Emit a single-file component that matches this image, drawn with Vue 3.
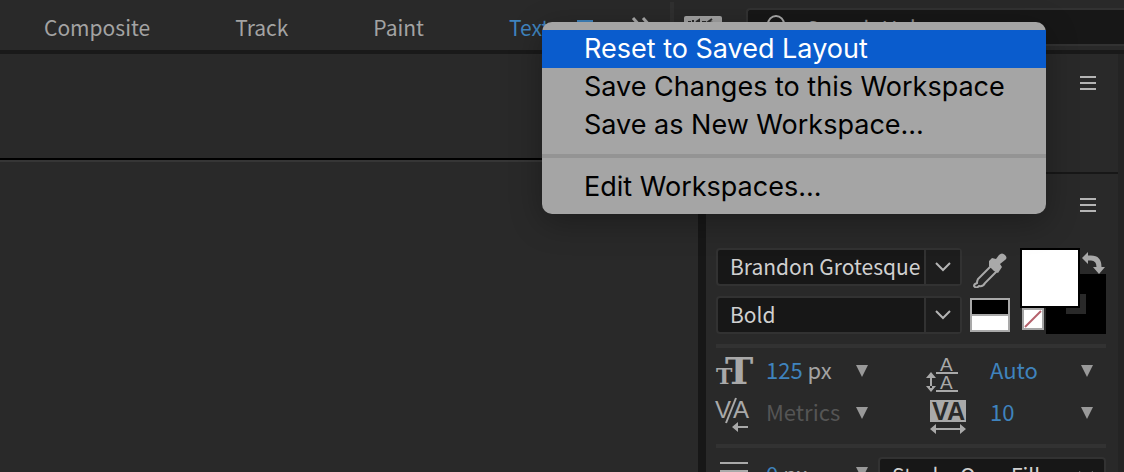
<script setup>
const tabs = ['Composite', 'Track', 'Paint']
const fields = [
  { id: 'family', label: 'Font family', value: 'Brandon Grotesque' },
  { id: 'weight', label: 'Font style', value: 'Bold' }
]
</script>

<template>
  <div class="app">
    <header class="topbar">
      <nav class="tabs" aria-label="Workspaces">
        <button v-for="t in tabs" :key="t">{{ t }}</button>
        <button class="active">Text</button>
      </nav>
      <button class="burger blue" aria-label="Workspace menu"><i></i><i></i><i></i></button>
      <button class="more" aria-label="More workspaces">
        <svg width="22" height="22" viewBox="0 0 22 22"><path d="M2 2l8 9-8 9M12 2l8 9-8 9" fill="none" stroke="#a9a9a9" stroke-width="3" /></svg>
      </button>
      <span class="rule"></span>
      <button class="keys" aria-label="Keyboard shortcuts">
        <svg width="38" height="22" viewBox="0 0 38 22"><rect width="38" height="22" rx="2" fill="#a3a3a3" /><path d="M4 6h3M9 4v3M12 6l3-2v3M18 6h4M28 3l-4 3 5 1" stroke="#292929" stroke-width="2" fill="none" /></svg>
      </button>
      <label class="search">
        <svg width="24" height="24" viewBox="0 0 24 24"><circle cx="14" cy="9" r="8" fill="none" stroke="#a9a9a9" stroke-width="2" /><path d="M8 15l-6 7" stroke="#a9a9a9" stroke-width="3" /></svg>
        <input type="search" placeholder="Search Help" aria-label="Search Help" />
      </label>
    </header>

    <main class="work">
      <section class="viewer"><div class="viewer-head"></div></section>
      <aside class="side">
        <section class="panel closed">
          <button class="burger" aria-label="Panel menu"><i></i><i></i><i></i></button>
        </section>
        <section class="panel">
          <button class="burger" aria-label="Character panel menu"><i></i><i></i><i></i></button>
          <div class="face">
            <div class="fields">
              <div v-for="f in fields" :key="f.id" class="combo">
                <select :id="f.id" :aria-label="f.label"><option>{{ f.value }}</option></select>
                <span class="arrow"><svg width="16" height="10" viewBox="0 0 16 10"><path d="M1 1l7 7 7-7" fill="none" stroke="#b4b4b4" stroke-width="2" /></svg></span>
              </div>
            </div>
            <div class="tools">
              <button class="picker" aria-label="Eyedropper">
                <svg width="34" height="36" viewBox="0 0 34 36">
                  <path d="M18 14L5 27Q4 29 4 31Q1 32 1 34Q3 37 6 34Q10 35 12 31L24 19" fill="none" stroke="#a9a9a9" stroke-width="2" />
                  <path d="M16 9l3-3 4 1 3-4Q29 0 32 3T32 8L27 12l2 3-4 6-4-2-5-5z" fill="#a9a9a9" />
                </svg>
              </button>
              <button class="bw" aria-label="Set to black or white"><b></b><b></b></button>
            </div>
            <svg class="swatches" width="86" height="86" viewBox="0 0 86 86" role="img" aria-label="Fill and stroke colour">
              <path d="M26 26h60v60H26zM46 46v20h20V46z" fill="#000" fill-rule="evenodd" />
              <rect width="60" height="60" fill="#000" /><rect x="2" y="2" width="56" height="56" fill="#fff" />
              <rect x="3" y="61" width="20" height="20" fill="#fff" stroke="#a5a5a5" stroke-width="2" />
              <path d="M5 79L21 63" stroke="#b5616b" stroke-width="2" />
              <path d="M67 10h4Q79 10 79 19" fill="none" stroke="#a9a9a9" stroke-width="5" />
              <path d="M62 10l6-6v12zM73 19h12l-6 7z" fill="#a9a9a9" />
            </svg>
          </div>

          <div class="metrics">
            <svg width="38" height="42" viewBox="0 0 38 42" class="slab"><text x="9" y="34" font-size="38">T</text><text x="0" y="34" font-size="22">T</text></svg>
            <button class="val"><em>125</em> px</button><button class="tri" aria-label="Font size options"></button>
            <svg width="40" height="42" viewBox="0 0 40 42" class="lead">
              <text x="14" y="21">A</text><text x="14" y="39">A</text>
              <path d="M10 22h22v2H10zM10 40h22v2H10zM4 26h2v12H4zM0 28l5-6 5 6zM0 36l5 6 5-6z" />
            </svg>
            <button class="val"><em>Auto</em></button><button class="tri" aria-label="Leading options"></button>

            <svg width="38" height="42" viewBox="0 0 38 42" class="kern">
              <text x="-1" y="26">V</text><text x="17" y="26">A</text>
              <path d="M10 31L20 6" stroke="#a9a9a9" stroke-width="2" />
              <path d="M16 35l6-5v4h10v2H22v4z" />
            </svg>
            <button class="val dim">Metrics</button><button class="tri" aria-label="Kerning options"></button>
            <svg width="40" height="42" viewBox="0 0 40 42" class="track">
              <rect x="4" y="8" width="36" height="22" />
              <text x="6" y="28">V</text><text x="21" y="28">A</text>
              <path d="M4 37l6-5v4h24v-4l6 5-6 5v-4H10v4z" />
            </svg>
            <button class="val"><em>10</em></button><button class="tri" aria-label="Tracking options"></button>
          </div>

          <div class="stroke">
            <svg width="38" height="38" viewBox="0 0 38 38"><path d="M4 5h28v2H4zM4 13h28v4H4zM4 23h28v6H4z" fill="#a9a9a9" /></svg>
            <button class="val"><em>0</em> px</button><button class="tri" aria-label="Stroke width options"></button>
            <div class="combo plain">
              <select aria-label="Stroke order"><option>Stroke Over Fill</option></select>
              <span class="arrow"><svg width="16" height="10" viewBox="0 0 16 10"><path d="M1 1l7 7 7-7" fill="none" stroke="#b4b4b4" stroke-width="2" /></svg></span>
            </div>
          </div>
        </section>
      </aside>
    </main>

    <div class="menu" role="menu">
      <button role="menuitem" class="hot">Reset to Saved Layout</button>
      <button role="menuitem">Save Changes to this Workspace</button>
      <button role="menuitem">Save as New Workspace...</button>
      <hr />
      <button role="menuitem">Edit Workspaces...</button>
    </div>
  </div>
</template>

<style>
body { margin: 0; background: #292929; }
</style>

<style scoped>
* { box-sizing: border-box; }
.app { position: relative; height: 100vh; overflow: hidden; display: flex; flex-direction: column; background: #292929; color: #a3a3a3; font: 22px/32px "Noto Sans CJK JP", sans-serif; }
button, select, input { font: inherit; color: inherit; background: none; border: 0; padding: 0; margin: 0; outline: 0; }
svg { display: block; flex: none; }
em { font-style: normal; color: #3f83bd; }

.topbar { flex: none; height: 54px; border-bottom: 4px solid #191919; display: flex; align-items: center; padding: 4px 0 0 44px; }
.tabs { display: flex; gap: 85px; font-size: 21px; }
.active { color: #3f83bd; }
.burger { display: flex; flex-direction: column; gap: 4px; width: 16px; flex: none; }
.burger i { height: 2px; background: #b4b4b4; }
.blue { margin-left: 28px; }
.blue i { background: #3f83bd; }
.more { margin-left: 38px; }
.rule { align-self: stretch; width: 4px; margin: -2px 10px 0 17px; background: #303030; }
.search { flex: 1; min-width: 0; height: 38px; margin-left: 24px; padding-left: 14px; border: 2px solid #323232; border-right: 0; border-radius: 4px 0 0 4px; background: #171717; display: flex; align-items: center; gap: 20px; }
.search input { flex: 1; min-width: 0; }
.search input::placeholder { color: #8c8c8c; opacity: 1; }

.work { flex: 1; min-height: 0; display: flex; }
.viewer { flex: 1; border-right: 8px solid #171717; }
.viewer-head { height: 106px; border-bottom: 2px solid #000; box-shadow: 0 2px #363636; }
.side { width: 418px; flex: none; border-right: 6px solid #242424; }
.panel { padding: 24px 12px 0 10px; display: flex; flex-direction: column; }
.panel .burger { align-self: flex-end; margin-right: 10px; }
.closed { height: 120px; padding-top: 22px; border-bottom: 2px solid #171717; }

.face { display: flex; margin-top: 36px; }
.fields { flex: 1; min-width: 0; display: flex; flex-direction: column; gap: 10px; }
.combo { display: flex; height: 38px; border: 2px solid #323232; border-radius: 4px; background: #171717; }
.combo select { flex: 1; min-width: 0; appearance: none; padding: 0 0 2px 12px; color: #d0d0d0; font-size: 21px; }
.arrow { width: 36px; flex: none; border-left: 2px solid #323232; background: #1d1d1d; display: flex; align-items: center; justify-content: center; }
.tools { width: 40px; margin: 0 10px 0 8px; display: flex; flex-direction: column; justify-content: space-between; align-items: center; }
.picker { padding-top: 4px; }
.bw { width: 40px; height: 34px; margin-bottom: 2px; padding: 2px; background: #a9a9a9; display: grid; grid-template-rows: 1fr 1fr; gap: 2px; }
.bw b { background: #000; }
.bw b + b { background: #fff; }

.metrics { margin-top: 10px; padding: 2px 0 10px; border: solid #323232; border-width: 4px 0; display: grid; grid-template-columns: 50px 90px 1fr 64px 91px 25px; grid-auto-rows: 42px; align-items: center; }
.metrics svg { fill: #a9a9a9; overflow: visible; }
.metrics .val { padding-bottom: 4px; }
.val { text-align: left; }
.dim { color: #555; }
.tri { width: 12px; height: 12px; background: #999; clip-path: polygon(0 0, 100% 0, 50% 100%); }
.slab { font-family: "DejaVu Serif", serif; font-weight: bold; }
.lead { font: 19px "Liberation Sans", sans-serif; }
.kern { font: 24px "Liberation Sans", sans-serif; }
.track { font: bold 25px "Liberation Sans", sans-serif; }
.track text { fill: #292929; }
.stroke { margin-top: 9px; display: grid; grid-template-columns: 50px 90px 22px 1fr; align-items: start; }
.stroke .tri { margin-top: 10px; }
.plain .arrow { border-left: 0; background: none; }

.menu { position: absolute; left: 542px; top: 22px; width: 504px; background: #a5a5a5; border-radius: 10px; padding: 8px 0; font: 27px/38px Inter, sans-serif; color: #000; display: flex; flex-direction: column; box-shadow: 0 8px 32px rgba(0, 0, 0, .3); }
.menu button { text-align: left; padding-left: 42px; }
.menu .hot { background: #0a5ccd; color: #fff; }
.menu hr { width: 100%; height: 4px; margin: 10px 0; border: 0; background: #949494; }
</style>
